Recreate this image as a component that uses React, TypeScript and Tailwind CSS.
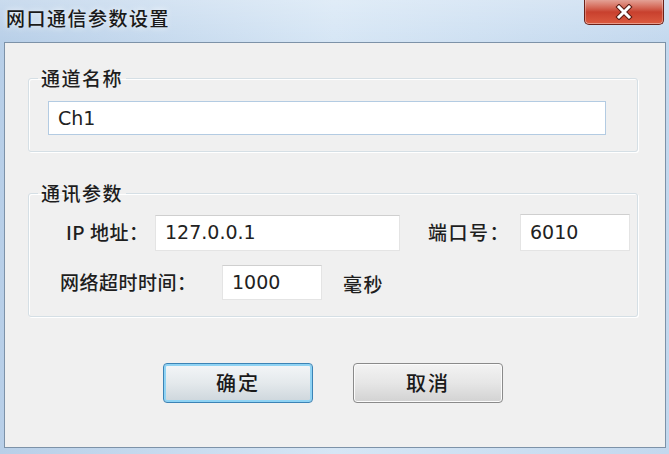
import React from 'react';

const cjk = "font-['Noto_Sans_CJK_SC','Noto_Sans',sans-serif]";
const num = "font-['DejaVu_Sans','Liberation_Sans',sans-serif]";

function Field({ value, className }: { value: string; className: string }) {
  return (
    <div
      className={`flex items-center bg-white pl-[9px] text-[19px] font-normal text-[#222] ${num} ${className}`}
    >
      {value}
    </div>
  );
}

function Group({ title, children, className = '' }: { title: string; children: React.ReactNode; className?: string }) {
  return (
    <fieldset
      className={`ml-[23px] w-[610px] p-0 rounded-[3px] border border-[#d5dfe5] shadow-[inset_1px_1px_0_#fff,1px_1px_0_#fff] ${className}`}
    >
      <legend className="ml-[9px] px-[3px] text-[19px] leading-[24px] tracking-[1.5px] text-[#1e1e1e]">{title}</legend>
      {children}
    </fieldset>
  );
}

export default function App() {
  return (
    <div
      className={`w-[669px] h-[454px] flex flex-col overflow-hidden bg-gradient-to-r from-[#b8cfe8] via-[#d6e6f5] to-[#c3d8ee] text-[#1e1e1e] font-medium ${cjk}`}
    >
      {/* title bar */}
      <div className="h-[42px] shrink-0 flex items-start justify-between bg-gradient-to-b from-[rgba(255,255,255,0.25)] to-transparent">
        <div className="pl-[6px] pt-[5px] text-[19px] leading-[26px] tracking-[1.5px] text-[#1a1a1a] [text-shadow:0_0_6px_rgba(255,255,255,0.9)]">
          网口通信参数设置
        </div>
        <button className="mr-[5px] w-[80px] h-[25px] flex items-center justify-center rounded-b-[5px] border border-t-0 border-[#6b2118] bg-gradient-to-b from-[#e3a196] via-[#c8402e] to-[#dc5a3f] shadow-[inset_0_-1px_0_rgba(255,255,255,0.4),inset_1px_0_0_rgba(255,255,255,0.3),inset_-1px_0_0_rgba(255,255,255,0.3)]">
          <svg width="18" height="16" viewBox="0 0 18 16">
            <path d="M4 3 L14 13 M14 3 L4 13" stroke="#5a1c14" strokeWidth="5" strokeLinecap="square" />
            <path d="M4 3 L14 13 M14 3 L4 13" stroke="#ffffff" strokeWidth="3" strokeLinecap="square" />
          </svg>
        </button>
      </div>

      {/* client area */}
      <div className="flex-1 ml-[4px] mr-[3px] mb-[6px] border border-[#7d92a8] bg-[#f0f0f0] flex flex-col">
        <Group title="通道名称" className="mt-[23px]">
          <div className="pt-[11px] pb-[16px] pl-[19px]">
            <Field value="Ch1" className="w-[558px] h-[34px] border border-[#b3cbe2]" />
          </div>
        </Group>

        <Group title="通讯参数" className="mt-[29px]">
          <div className="pt-[9px] pb-[16px] flex flex-col gap-[14px] text-[19px] tracking-[1.5px]">
            <div className="flex items-center">
              <span className="ml-[37px] w-[89px] tracking-[0.5px]">IP 地址：</span>
              <Field value="127.0.0.1" className="w-[245px] h-[36px] border border-[#e4e4e4] border-t-[#cfcfcf] tracking-normal" />
              <span className="ml-[28px] w-[92px]">端口号：</span>
              <Field value="6010" className="w-[110px] h-[37px] border border-[#e4e4e4] border-t-[#cfcfcf] tracking-normal" />
            </div>
            <div className="flex items-center">
              <span className="ml-[31px] w-[162px] tracking-[0.5px]">网络超时时间：</span>
              <Field value="1000" className="w-[100px] h-[35px] border border-[#e4e4e4] border-t-[#cfcfcf] tracking-normal" />
              <span className="ml-[21px] mt-[4px]">毫秒</span>
            </div>
          </div>
        </Group>

        <div className="mt-[46px] pl-[158px] flex gap-[40px]">
          <button className="w-[150px] h-[40px] rounded-[4px] border border-[#3c83b5] shadow-[inset_0_0_0_2px_#8fd3f4] bg-gradient-to-b from-[#f4f6f8] via-[#e4e9ec] to-[#cdd6dc] text-[20px] tracking-[2px] text-[#1a1a1a]">
            确定
          </button>
          <button className="w-[150px] h-[40px] rounded-[4px] border border-[#8a8a8a] shadow-[inset_0_0_0_1px_#fbfbfb] bg-gradient-to-b from-[#f3f3f3] via-[#e6e6e6] to-[#d2d2d2] text-[20px] tracking-[2px] text-[#1a1a1a]">
            取消
          </button>
        </div>
      </div>
    </div>
  );
}
